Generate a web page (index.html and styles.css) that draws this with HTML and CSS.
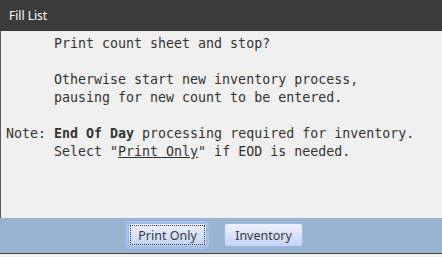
FILE: index.html
```html
<!DOCTYPE html>
<html lang="en">
<head>
  <meta charset="UTF-8">
  <title>Fill List</title>
  <link rel="stylesheet" href="styles.css">
</head>
<body>
  <div class="window">
    <div class="title-bar">Fill List</div>
    <div class="content">
      <div class="message">
        <p class="line">Print count sheet and stop?</p>
        <p class="line blank"></p>
        <p class="line">Otherwise start new inventory process,</p>
        <p class="line">pausing for new count to be entered.</p>
        <p class="line blank"></p>
        <div class="note">
          <span class="note-label">Note:</span>
          <div class="note-text">
            <p class="note-line"><b>End Of Day</b> processing required for inventory.</p>
            <p class="note-line">Select "<u>Print Only</u>" if EOD is needed.</p>
          </div>
        </div>
      </div>
    </div>
    <div class="button-bar">
      <button class="btn focused"><span class="btn-label">Print Only</span></button>
      <button class="btn"><span class="btn-label">Inventory</span></button>
    </div>
  </div>
</body>
</html>
```

FILE: styles.css
```css
/* Global Styles */
body {
  margin: 0;
  padding: 0;
  background-color: #f0f0f0;
}

.window {
  width: 442px;
  height: 257px;
  display: flex;
  flex-direction: column;
  background-color: #f0f0f0;
}

/* Title Bar */
.title-bar {
  height: 31px;
  line-height: 31px;
  padding-left: 9px;
  background-color: #3b3b3b;
  color: #ffffff;
  font-family: "Noto Sans", sans-serif;
  font-size: 12px;
}

/* Message Area */
.content {
  height: 187px;
  border-left: 1px solid #5a5a5a;
  box-sizing: border-box;
  padding: 4px 0 0 5px;
}

.message {
  font-family: "DejaVu Sans Mono", monospace;
  font-size: 13.3px;
  line-height: 18px;
  color: #333333;
}

.line,
.note-line {
  margin: 0;
  height: 18px;
  white-space: pre;
}

.line {
  padding-left: 48px;
}

.note {
  display: flex;
}

.note-label {
  width: 48px;
  flex-shrink: 0;
}

/* Buttons */
.button-bar {
  height: 36px;
  box-sizing: border-box;
  background-color: #99b4d1;
  border-bottom: 1px solid #404040;
  display: flex;
  align-items: flex-start;
  gap: 17px;
  padding: 5px 0 0 128px;
}

.btn {
  width: 79px;
  height: 24px;
  padding: 1px;
  border: 1px solid #9fb5e6;
  border-radius: 3px;
  background: linear-gradient(to bottom, #eef2ff, #c3d4f8);
  font-family: "Noto Sans", sans-serif;
  font-size: 12.5px;
  color: #3a3a3a;
}

.btn-label {
  display: flex;
  align-items: center;
  justify-content: center;
  height: 100%;
  box-sizing: border-box;
}

.btn.focused {
  box-shadow: 0 0 0 2px #a9bfef;
}

.btn.focused .btn-label {
  border: 1px dotted #333333;
}
```
